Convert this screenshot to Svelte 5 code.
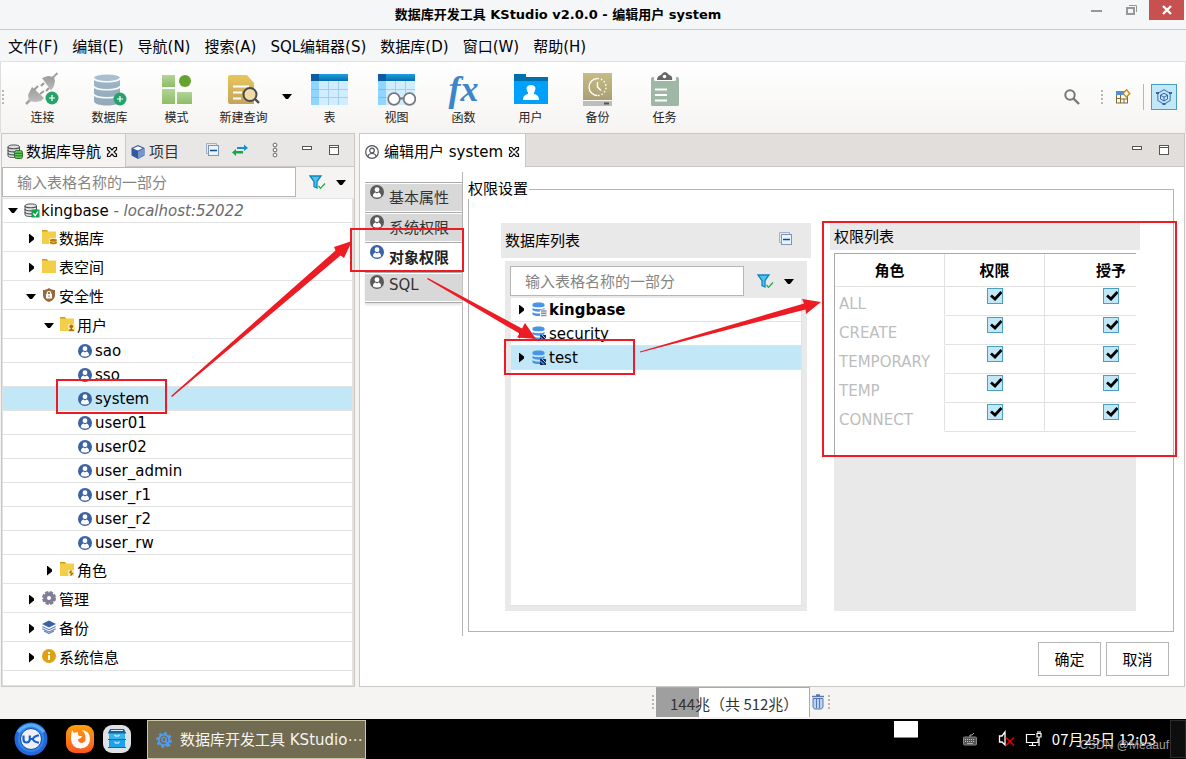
<script>
  const menus = ['文件(F)', '编辑(E)', '导航(N)', '搜索(A)', 'SQL编辑器(S)', '数据库(D)', '窗口(W)', '帮助(H)'];

  const tree = [
    { label: 'kingbase', note: ' - localhost:52022', level: 0, icon: 'server', open: true },
    { label: '数据库', level: 1, icon: 'folderDb', open: false },
    { label: '表空间', level: 1, icon: 'folder', open: false },
    { label: '安全性', level: 1, icon: 'shield', open: true },
    { label: '用户', level: 2, icon: 'folderUser', open: true },
    { label: 'sao', level: 3, icon: 'user' },
    { label: 'sso', level: 3, icon: 'user' },
    { label: 'system', level: 3, icon: 'user', selected: true },
    { label: 'user01', level: 3, icon: 'user' },
    { label: 'user02', level: 3, icon: 'user' },
    { label: 'user_admin', level: 3, icon: 'user' },
    { label: 'user_r1', level: 3, icon: 'user' },
    { label: 'user_r2', level: 3, icon: 'user' },
    { label: 'user_rw', level: 3, icon: 'user' },
    { label: '角色', level: 2, icon: 'folderRole', open: false },
    { label: '管理', level: 1, icon: 'gear', open: false },
    { label: '备份', level: 1, icon: 'layers', open: false },
    { label: '系统信息', level: 1, icon: 'info', open: false },
  ];
  const isTall = (s) => /[\u4e00-\u9fff]/.test(s);

  const sideTabs = ['基本属性', '系统权限', '对象权限', 'SQL'];
  let activeTab = $state('对象权限');

  const databases = [
    { name: 'kingbase', bold: true },
    { name: 'security' },
    { name: 'test', selected: true },
  ];

  let grants = $state(
    ['ALL', 'CREATE', 'TEMPORARY', 'TEMP', 'CONNECT'].map((role) => ({ role, allow: true, grant: true }))
  );
</script>

{#snippet close()}
  <svg width="12" height="12" viewBox="0 0 12 12"><path d="M1.500 1.500H3.800L6 4 8.200 1.500H10.500V3.800L8 6 10.500 8.200V10.500H8.200L6 8 3.800 10.500H1.500V8.200L4 6 1.500 3.800Z" fill="#fff" stroke="#111" stroke-width="1.200" /></svg>
{/snippet}

{#snippet minimize()}
  <svg width="10" height="4" viewBox="0 0 10 4"><rect x=".5" y=".5" width="9" height="3" fill="#fff" stroke="#555" /></svg>
{/snippet}

{#snippet maximize()}
  <svg width="10" height="10" viewBox="0 0 10 10"><rect x=".5" y=".5" width="9" height="9" fill="#fff" stroke="#555" /><path d="M1 2.500H9" stroke="#555" /></svg>
{/snippet}

{#snippet collapseAll()}
  <svg width="14" height="14" viewBox="0 0 14 14"><path d="M.5 10.500V.5H10.500V2M.5 10.500H2" fill="none" stroke="#a3b1c6" /><rect x="2.500" y="2.500" width="10" height="10" fill="#e8f5ff" stroke="#8095b5" /><path d="M4 7.500H11" stroke="#124a86" stroke-width="1.500" /></svg>
{/snippet}

{#snippet filter()}
  <svg width="17" height="15" viewBox="0 0 17 15"><path d="M1 1H12L8 6.500V13L5 11.500V6.500Z" fill="#55c0ea" stroke="#0b88c4" stroke-width="1.300" /><path d="M9.500 11L11.500 13.300 16 8.500" fill="none" stroke="#18a845" stroke-width="1.200" /></svg>
{/snippet}

{#snippet caret()}
  <svg width="10" height="5" viewBox="0 0 10 5"><path d="M0 0H10L6 5H4Z" fill="#000" /></svg>
{/snippet}

{#snippet userIcon(color)}
  <svg width="14" height="14" viewBox="0 0 14 14"><circle cx="7" cy="7" r="7" fill={color} /><circle cx="7" cy="4.700" r="2.400" fill="#fff" /><path d="M2.800 11.300C3 8.700 4.500 7.800 5.500 7.600L7 8.500 8.500 7.600C9.500 7.800 11 8.700 11.200 11.300 9 13 5 13 2.800 11.300Z" fill="#fff" /></svg>
{/snippet}

{#snippet dbIcon(kind)}
  <svg width="15" height="15" viewBox="0 0 15 15">
    <path d="M.5 2.300C.5-.2 12.500-.2 12.500 2.300V4C12.500 5.800.5 5.800.5 4ZM.5 6C3 7.600 10 7.600 12.500 6V8.300C10 10.200 3 10.200.5 8.300ZM.5 10.300C3 12 10 12 12.500 10.300V12.500C10 14.600 3 14.600.5 12.500Z" fill="#4a94e4" />
    {#if kind === 'lines'}
      <rect x="8" y="7.500" width="7" height="7.500" rx="1.500" fill="#fff" /><path d="M9 9H14.500M9 11.300H14.500M9 13.500H14.500" stroke="#8c8ca4" stroke-width="1.400" />
    {:else}
      <rect x="8" y="9" width="6" height="6" fill="#102a60" /><path d="M8 10.500L12 14.500M10 9L14 13" stroke="#b5c8e5" />
    {/if}
  </svg>
{/snippet}

{#snippet treeIcon(kind)}
  {#if kind === 'user'}
    {@render userIcon('#3a62a5')}
  {:else if kind === 'server'}
    <svg width="16" height="15" viewBox="0 0 16 15"><path d="M1 2.800C1 .3 12.500.3 12.500 2.800V12C12.500 14 1 14 1 12Z" fill="#e8e8e8" stroke="#4d5358" /><path d="M1 3C1 5.300 12.500 5.300 12.500 3M1 6C1 8.500 12.500 8.500 12.500 6M1 9C1 11.500 12.500 11.500 12.500 9" fill="none" stroke="#4d5358" stroke-width="1.200" /><rect x="7.500" y="6.500" width="8" height="8" fill="#12a150" /><path d="M9.300 10.300L11.200 12.700 14 8.500" fill="none" stroke="#fff" stroke-width="1.300" /></svg>
  {:else if kind === 'shield'}
    <svg width="14" height="14" viewBox="0 0 14 14"><path d="M7 0C9 1.500 11 2 13 2V7C13 10.500 10.500 12.800 7 14 3.500 12.800 1 10.500 1 7V2C3 2 5 1.500 7 0Z" fill="#99683d" /><rect x="4" y="6" width="6" height="4.500" fill="#fff" /><path d="M5.300 6V4.800Q5.300 3.500 7 3.500T8.700 4.800V6" fill="none" stroke="#fff" stroke-width="1.200" /><path d="M7 7.300V9.200" stroke="#99683d" /></svg>
  {:else if kind === 'gear'}
    <svg width="14" height="14" viewBox="0 0 14 14"><circle cx="7" cy="7" r="5.700" fill="#827d96" /><circle cx="7" cy="7" r="5.800" fill="none" stroke="#827d96" stroke-width="2.400" stroke-dasharray="3.200 1.355" /><circle cx="7" cy="7" r="2" fill="#fff" /></svg>
  {:else if kind === 'layers'}
    <svg width="14" height="14" viewBox="0 0 14 14"><path d="M7 .5L14 4 7 7.500 0 4Z" fill="#3a62a5" /><path d="M.3 6.500L7 9.700 13.700 6.500M.3 8.800L7 12 13.700 8.800M2 11L7 13.500 12 11" fill="none" stroke="#5f80b8" stroke-width="1.100" /></svg>
  {:else if kind === 'info'}
    <svg width="14" height="14" viewBox="0 0 14 14"><circle cx="7" cy="7" r="7" fill="#e0a011" /><path d="M6 3H8V5H6ZM6 6H8V11H6Z" fill="#fff" /></svg>
  {:else}
    <svg width="15" height="15" viewBox="0 0 15 15">
      <path d="M0 0H5L6.500 2H0Z" fill="#d99b16" /><path d="M0 1.500H14V14H0Z" fill="#f3ce47" />
      {#if kind === 'folderDb'}
        <rect x="7" y="8" width="8" height="7" rx="2" fill="#fff3c4" /><ellipse cx="11.300" cy="10.300" rx="3.500" ry="1.500" fill="#b87b10" /><path d="M8 12.300Q11.300 14.500 14.800 12.300" fill="none" stroke="#b87b10" stroke-width="1.800" />
      {:else if kind === 'folderUser'}
        <path d="M8 7H15V15H8Z" fill="#fbe9a4" /><circle cx="11.300" cy="9.300" r="1.900" fill="#a8740f" /><path d="M8.500 14Q8.500 12 11.300 12T14.300 14Z" fill="#a8740f" /><path d="M11.300 10V13" stroke="#a8740f" stroke-width="1.400" />
      {:else if kind === 'folderRole'}
        <path d="M8 8H14V14H8Z" fill="#fbe9a4" /><path d="M11.500 8.500L10 10.500 12.500 11.500 10.500 13.500" fill="none" stroke="#a8740f" stroke-width="1.400" />
      {/if}
    </svg>
  {/if}
{/snippet}

{#snippet tableShape()}
  <rect x="0" y="2" width="37" height="31" fill="#d0edff" /><rect x="0" y="8" width="8" height="25" fill="#8fd5ff" /><path d="M8 17.500H37M8 25.500H37M17.500 9V33M27.500 9V33" stroke="#a4cfe9" /><path d="M0 17.500H8M0 25.500H8" stroke="#77bfeb" /><rect x="0" y="2" width="37" height="7" fill="url(#tblHead)" /><rect x="0" y="2" width="8" height="7" fill="#0c5ba3" />
{/snippet}

{#snippet plusBadge(x, y)}
  <circle cx={x} cy={y} r="6.500" fill="#25a36b" /><path d="M{x - 3} {y}H{x + 3}M{x} {y - 3}V{y + 3}" stroke="#fff" stroke-width="1.200" />
{/snippet}

{#snippet tool(label, art)}
  <button class="tool">{@render art()}<span>{label}</span></button>
{/snippet}

{#snippet artConnect()}
  <svg width="37" height="34" viewBox="0 0 37 34"><defs><linearGradient id="plug" x1="0" y1="0" x2="0" y2="1"><stop offset="0" stop-color="#9b9b9b" /><stop offset="1" stop-color="#bbb" /></linearGradient></defs><path d="M33.500 1L28 6.500" stroke="#a3a3a3" stroke-width="2" /><path d="M18 6L24 4 30 5 31 9 30 14 27 18.500Z" fill="url(#plug)" /><path d="M20 11L17 14M25 16L22 19" stroke="#9b9b9b" stroke-width="2.200" /><path d="M2 32L6 28" stroke="#a3a3a3" stroke-width="2.500" /><path d="M8 15L20 26 17 29 11 30 5 29 4 23Z" fill="url(#plug)" /><path d="M10 18L14 14M16 22L20 19" stroke="#9b9b9b" stroke-width="2" />{@render plusBadge(28, 26)}</svg>
{/snippet}
{#snippet artDatabase()}
  <svg width="37" height="34" viewBox="0 0 37 34"><defs><linearGradient id="cyl" x1="0" y1="0" x2="0" y2="1"><stop offset="0" stop-color="#9eb5c7" /><stop offset="1" stop-color="#93a9b8" /></linearGradient></defs><path d="M3 6V29C3 35 29 35 29 29V6Z" fill="url(#cyl)" /><ellipse cx="16" cy="6" rx="13" ry="3.500" fill="#a9bfd0" /><path d="M3 6C3 11 29 11 29 6M3 14C3 19 29 19 29 14M3 22C3 27 29 27 29 22" fill="none" stroke="#f6f9fa" stroke-width="1.500" />{@render plusBadge(29, 27)}</svg>
{/snippet}
{#snippet artSchema()}
  <svg width="30" height="34" viewBox="0 0 30 34"><defs><linearGradient id="sq" x1="0" y1="0" x2="0" y2="1"><stop offset="0" stop-color="#b2d498" /><stop offset="1" stop-color="#8dbd67" /></linearGradient></defs><rect y="3" width="13" height="12" fill="url(#sq)" /><circle cx="23" cy="9" r="6" fill="#66a22e" /><rect y="17" width="13" height="15" fill="url(#sq)" /><rect x="15" y="20" width="15" height="12" fill="url(#sq)" /></svg>
{/snippet}
{#snippet artQuery()}
  <svg width="32" height="34" viewBox="0 0 32 34"><defs><linearGradient id="doc" x1="0" y1="0" x2="0" y2="1"><stop offset="0" stop-color="#e8c65c" /><stop offset="1" stop-color="#c4a45b" /></linearGradient></defs><path d="M2 3H19L26 11V32H2Q0 32 0 30V5Q0 3 2 3Z" fill="url(#doc)" /><path d="M5 14.500H21M5 20.500H14M5 26.500H13" stroke="#fff" stroke-width="2" /><circle cx="22" cy="22.500" r="6.500" fill="#f0dbad" stroke="#494949" stroke-width="2" /><path d="M27 27L31 31" stroke="#494949" stroke-width="2.400" /></svg>
{/snippet}
{#snippet artTable()}
  <svg width="37" height="34" viewBox="0 0 37 34"><defs><linearGradient id="tblHead" x1="0" y1="0" x2="0" y2="1"><stop offset="0" stop-color="#1ba0e3" /><stop offset="1" stop-color="#086ca9" /></linearGradient></defs>{@render tableShape()}</svg>
{/snippet}
{#snippet artView()}
  <svg width="38" height="34" viewBox="0 0 38 34">{@render tableShape()}<circle cx="16" cy="27" r="5.800" fill="#fff" stroke="#777" stroke-width="1.700" /><circle cx="31.500" cy="27" r="5.800" fill="#fff" stroke="#777" stroke-width="1.700" /><path d="M21.500 26.500H26" stroke="#777" stroke-width="2" /></svg>
{/snippet}
{#snippet artFunction()}
  <span class="fx">fx</span>
{/snippet}
{#snippet artUser()}
  <svg width="34" height="34" viewBox="0 0 34 34"><path d="M0 2H12V5H34V10H0Z" fill="#0070ad" /><rect y="9" width="34" height="23" fill="#00a1fd" /><path d="M17 13C22 13 22.500 17 20 20.500V22C23 23 25 23.500 25 28H9C9 23.500 11 23 14 22V20.500C11.500 17 12 13 17 13Z" fill="#fff" /></svg>
{/snippet}
{#snippet artBackup()}
  <svg width="29" height="34" viewBox="0 0 29 34"><defs><linearGradient id="bak" x1="0" y1="0" x2="0" y2="1"><stop offset="0" stop-color="#c8bc84" /><stop offset="1" stop-color="#a99f72" /></linearGradient></defs><rect y="1" width="29" height="27" fill="url(#bak)" /><rect y="29" width="29" height="5" fill="#bdbdbd" /><path d="M21 31.500H26" stroke="#555" stroke-width="2" /><path d="M14.500 6.500A8.500 8.500 0 0 0 14.500 23.500" fill="none" stroke="#fff" stroke-width="1.300" /><path d="M14.500 6.500A8.500 8.500 0 0 1 14.500 23.500" fill="none" stroke="#fff" stroke-width="1.500" stroke-dasharray="1.500 2" /><path d="M14.500 10V15L18 18.500" fill="none" stroke="#fff" stroke-width="1.500" /></svg>
{/snippet}
{#snippet artTask()}
  <svg width="28" height="34" viewBox="0 0 28 34"><rect y="5" width="28" height="29" rx="1.500" fill="#9fb7a5" /><path d="M3 4H25V8Q25 9 23 9H5Q3 9 3 8Z" fill="#fafafa" /><path d="M6 8Q6 4 10 3Q14-3 18 3Q22 4 21 8Z" fill="#666" /><circle cx="13.500" cy="4.500" r="1.800" fill="#fff" /><path d="M4 17.500H16M4 23H16M4 28.500H16" stroke="#fff" stroke-width="2" /></svg>
{/snippet}

<div class="screen">
  <header class="titlebar">
    <h1>数据库开发工具 KStudio v2.0.0 - 编辑用户 system</h1>
    <div class="winctl">
      <button aria-label="最小化"><svg width="11" height="12" viewBox="0 0 11 12"><path d="M0 7H11" stroke="#979797" stroke-width="2" /></svg></button>
      <button aria-label="还原"><svg width="11" height="12" viewBox="0 0 11 12"><rect x="1" y="4" width="7" height="6" fill="none" stroke="#979797" stroke-width="2" /><path d="M3 1.500H10.500V8" fill="none" stroke="#979797" /></svg></button>
      <button class="quit" aria-label="关闭"><svg width="10" height="10" viewBox="0 0 10 10"><path d="M1 1L9 9M9 1L1 9" stroke="#fff" stroke-width="2.400" /></svg></button>
    </div>
  </header>

  <nav class="menubar">
    {#each menus as m}<button>{m}</button>{/each}
  </nav>

  <div class="toolbar">
    <i class="grip"></i>
    <div class="tools">
      {@render tool('连接', artConnect)}
      {@render tool('数据库', artDatabase)}
      {@render tool('模式', artSchema)}
      {@render tool('新建查询', artQuery)}
      <button class="drop" aria-label="更多">{@render caret()}</button>
      {@render tool('表', artTable)}
      {@render tool('视图', artView)}
      {@render tool('函数', artFunction)}
      {@render tool('用户', artUser)}
      {@render tool('备份', artBackup)}
      {@render tool('任务', artTask)}
    </div>
    <div class="right-tools">
      <button aria-label="搜索"><svg width="16" height="16" viewBox="0 0 16 16"><circle cx="6" cy="6" r="4.700" fill="none" stroke="#777" stroke-width="2" /><path d="M9.500 9.500L15 15" stroke="#777" stroke-width="2.400" /></svg></button>
      <i class="grip"></i>
      <button aria-label="打开透视图"><svg width="16" height="16" viewBox="0 0 16 16"><rect x="1.500" y="3.500" width="11" height="10.500" fill="#fdf9e8" stroke="#7c6c3c" /><rect x="1" y="2" width="9" height="4" fill="#4f8fd6" /><path d="M5.500 6V14M1.500 9.500H5.500M5.500 10H12.500M9 10V14" stroke="#7c6c3c" /><path d="M11.500 .8L14.800 4.500 11.500 8 8 4.500Z" fill="#fff" stroke="#c08d17" stroke-width="1.400" /></svg></button>
      <i class="rule"></i>
      <button class="persp" aria-label="透视图"><svg width="16" height="16" viewBox="0 0 16 16"><path d="M8 .8L14.200 4.300V11.500L8 15.200 1.800 11.500V4.300Z" fill="none" stroke="#5384c0" stroke-width="1.200" /><path d="M8 4.200L11.500 6.200V10L8 12 4.500 10V6.200ZM4.500 6.200L8 8.200 11.500 6.200M8 8.200V12" fill="none" stroke="#3a62a5" /><path d="M0 4H3M13 4H16M6.500 15H9.500" stroke="#3a62a5" stroke-width="2" /></svg></button>
    </div>
  </div>

  <main>
    <section class="panel nav">
      <div class="tabbar">
        <button class="tab on">
          <svg width="16" height="15" viewBox="0 0 16 15"><path d="M1 2.800C1 .3 12.500.3 12.500 2.800V12C12.500 14 1 14 1 12Z" fill="#ddd" stroke="#4d5358" /><path d="M1 3C1 5.300 12.500 5.300 12.500 3M1 6C1 8.500 12.500 8.500 12.500 6M1 9C1 11.500 12.500 11.500 12.500 9" fill="none" stroke="#4d5358" stroke-width="1.200" /><rect x="7.500" y="6.500" width="8" height="8" rx="2" fill="#63c558" stroke="#26752b" /><path d="M8 9.300H15M8 11.800H15" stroke="#26752b" /></svg>
          <span>数据库导航</span>{@render close()}
        </button>
        <button class="tab">
          <svg width="14" height="14" viewBox="0 0 14 14"><path d="M7 0L13.500 3V10.500L7 14 .5 10.500V3Z" fill="#31599e" /><path d="M7 6.500L13 3.500V10.300L7 13.500Z" fill="#7896c8" /><path d="M2 3.500L7 1.300 11.500 3.300 7 5.500Z" fill="#fff" /></svg>
          <span>项目</span>
        </button>
        <div class="tabtools">
          {@render collapseAll()}
          <svg width="16" height="12" viewBox="0 0 16 12"><path d="M5 3H12V.5L16 4 12 7V5H5Z" fill="#1191cf" /><path d="M11 7H4V5L0 8.500 4 12V9.500H11Z" fill="#19a643" /></svg>
          <svg width="6" height="16" viewBox="0 0 6 16"><circle cx="3" cy="3" r="1.900" fill="#fff" stroke="#666" /><circle cx="3" cy="8" r="1.900" fill="#fff" stroke="#666" /><circle cx="3" cy="13" r="1.900" fill="#fff" stroke="#666" /></svg>
          <span class="up">{@render minimize()}</span>
          {@render maximize()}
        </div>
      </div>
      <div class="search">
        <input type="text" aria-label="过滤对象" placeholder="输入表格名称的一部分" />
        <button class="filter" aria-label="过滤器">{@render filter()}{@render caret()}</button>
      </div>
      <ul class="tree">
        {#each tree as n}
          <li>
            <button class="row level{n.level}" class:tall={isTall(n.label)} class:selected={n.selected}>
              <span class="twist" class:open={n.open} class:shut={n.open === false}></span>
              <span class="ico">{@render treeIcon(n.icon)}</span>
              <span>{n.label}</span>
              {#if n.note}<em>{n.note}</em>{/if}
            </button>
          </li>
        {/each}
      </ul>
    </section>

    <section class="panel editor">
      <div class="tabbar">
        <button class="tab on">
          <svg width="14" height="14" viewBox="0 0 14 14"><circle cx="7" cy="7" r="6.300" fill="#fff" stroke="#50545a" stroke-width="1.200" /><circle cx="7" cy="5.500" r="2.300" fill="none" stroke="#50545a" stroke-width="1.200" /><path d="M3 11.500Q3.300 8.500 7 8.500T11 11.500" fill="none" stroke="#50545a" stroke-width="1.200" /></svg>
          <span>编辑用户 system</span>{@render close()}
        </button>
        <div class="tabtools">
          <span class="up">{@render minimize()}</span>
          {@render maximize()}
        </div>
      </div>

      <div class="editor-body">
        <div class="pages">
          {#each sideTabs as t}
            <button class:on={activeTab === t} class:cjk={isTall(t)} onclick={() => (activeTab = t)}>
              {@render userIcon(activeTab === t ? '#3a62a5' : '#5a5a5a')}<span>{t}</span>
            </button>
          {/each}
        </div>
        <div class="page">
          <fieldset>
            <legend>权限设置</legend>
            <div class="split">
              <div class="dblist">
                <div class="head"><h2>数据库列表</h2><button aria-label="全部折叠">{@render collapseAll()}</button></div>
                <div class="box">
                  <div class="search">
                    <input type="text" aria-label="过滤数据库" placeholder="输入表格名称的一部分" />
                    <button class="filter" aria-label="过滤器">{@render filter()}{@render caret()}</button>
                  </div>
                  <ul class="tree">
                    {#each databases as d}
                      <li>
                        <button class="row" class:selected={d.selected} class:bold={d.bold}>
                          <span class="twist shut"></span>
                          <span class="ico">{@render dbIcon(d.bold ? 'lines' : 'hatch')}</span>
                          <span>{d.name}</span>
                        </button>
                      </li>
                    {/each}
                  </ul>
                </div>
              </div>

              <div class="permlist">
                <div class="head"><h2>权限列表</h2></div>
                <div class="box">
                  <div class="sheet">
                    <table>
                      <thead><tr><th class="role">角色</th><th class="allow">权限</th><th class="give">授予</th></tr></thead>
                      <tbody>
                        {#each grants as g}
                          <tr>
                            <td class="name">{g.role}</td>
                            <td><input type="checkbox" aria-label="{g.role} 权限" bind:checked={g.allow} /></td>
                            <td><input type="checkbox" aria-label="{g.role} 授予" bind:checked={g.grant} /></td>
                          </tr>
                        {/each}
                      </tbody>
                    </table>
                  </div>
                </div>
              </div>
            </div>
          </fieldset>
          <div class="actions"><button>确定</button><button>取消</button></div>
        </div>
      </div>
    </section>
  </main>

  <div class="status">
    <i class="grip"></i>
    <div class="heap">144兆（共 512兆）</div>
    <button class="trash" aria-label="回收内存"><svg width="12" height="16" viewBox="0 0 12 16"><path d="M0 2.500H12M4 1H8" stroke="#5877ad" stroke-width="1.500" /><path d="M1 4.500H11V13L9.500 15H2.500L1 13Z" fill="#b8d2f2" stroke="#5877ad" /><path d="M4.500 5V14M7.500 5V14" stroke="#5877ad" /></svg></button>
    <i class="grip"></i>
  </div>

  <footer class="taskbar">
    <button class="start" aria-label="开始"><svg width="34" height="34" viewBox="0 0 34 34"><circle cx="17" cy="17" r="16.500" fill="#2467d8" /><circle cx="17" cy="17" r="13" fill="#2e86ee" /><path d="M4 10Q17-4 30 10" fill="none" stroke="#57adf8" stroke-width="3" /><circle cx="17" cy="17" r="10.500" fill="#eef0f3" stroke="#17489d" /><path d="M9.500 13.500V17.500Q9.500 20.500 12.500 20.500T15.800 17.500V13.500M25 13.500H23.500Q20 14.500 18.500 17 20 19.800 23.500 20.500H25M16 17H20" fill="none" stroke="#1860d0" stroke-width="2.200" /></svg></button>
    <button class="app" aria-label="浏览器"><svg width="28" height="28" viewBox="0 0 28 28"><defs><linearGradient id="ff" x1="0" y1="0" x2="0" y2="1"><stop offset="0" stop-color="#ff9d0a" /><stop offset="1" stop-color="#ff5722" /></linearGradient></defs><rect width="28" height="28" rx="9" fill="url(#ff)" /><path d="M6 5L8 8 12 7Q11 9 13 11L16 11Q15 14 12 14Q12 18 16 18Q20 17 19.500 13Q19.500 8 16 5Q24 6 24 14Q23.500 23 14.500 23.500Q5.500 23 5 14Q4.800 9 6 5Z" fill="#fff" /></svg></button>
    <button class="app" aria-label="文件管理器"><svg width="28" height="28" viewBox="0 0 28 28"><rect width="28" height="28" rx="9" fill="#dde2e6" /><path d="M7 4H21L23 8H5Z" fill="#12639a" /><path d="M8 5.500H20" stroke="#dfeefa" /><rect x="6" y="8" width="16" height="6" fill="#36b3f3" /><rect x="6" y="15" width="16" height="7" fill="#1ca2ec" /><path d="M5 8H23M5 14.500H23M5 22.500H23" stroke="#176b9d" /><path d="M12 9.500V11H16V9.500M12 16.500V18H16V16.500" fill="none" stroke="#fff" /></svg></button>
    <button class="task"><svg width="16" height="16" viewBox="0 0 16 16"><circle cx="8" cy="8" r="5.300" fill="none" stroke="#4f9df5" stroke-width="1.800" /><circle cx="8" cy="8" r="6.800" fill="none" stroke="#4f9df5" stroke-width="2.200" stroke-dasharray="2.600 2.740" /><circle cx="8" cy="7.500" r="2.200" fill="none" stroke="#4f9df5" stroke-width="1.300" /><path d="M9 9L14 14" stroke="#4f9df5" stroke-width="2" /></svg><span>数据库开发工具 KStudio⋯</span></button>
    <div class="tray">
      <i class="desk"></i>
      <svg class="kbd" width="14" height="14" viewBox="0 0 14 14"><rect x=".5" y="5" width="13" height="8" rx="1" fill="#555" stroke="#858585" /><path d="M2 7.500H12M2 9.500H12" stroke="#c4c4c4" stroke-dasharray="1 1" /><path d="M4 11.500H10M7 5V3H9L11 1" fill="none" stroke="#aaa" /></svg>
      <svg class="snd" width="17" height="18" viewBox="0 0 17 18"><path d="M1.500 6H4L7 2V15L4 12H1.500Z" fill="none" stroke="#fff" stroke-width="1.300" /><path d="M8 7.500L16 15.500M16 7.500L8 15.500" stroke="#d00" stroke-width="1.600" /></svg>
      <svg class="net" width="17" height="18" viewBox="0 0 17 18"><path d="M10 4.500H1.500V12.500H13V9M7.500 13V15.500M4 15.500H11" fill="none" stroke="#fff" stroke-width="1.200" /><path d="M12 3.500H16V7H12ZM13 1V3.500M15 1V3.500M14 7V16" fill="none" stroke="#fff" stroke-width="1.200" /></svg>
      <time>07月25日 12:03</time>
      <i class="edge"></i>
    </div>
    <span class="mark">CSDN @Meaauf</span>
  </footer>

  <svg class="notes" width="1186" height="759" viewBox="0 0 1186 759" aria-hidden="true">
    <g fill="none" stroke="#ed1c24" stroke-width="2">
      <rect x="57" y="380" width="109" height="33" /><rect x="351" y="229" width="112" height="42" /><rect x="505" y="340" width="129" height="34" /><rect x="823" y="222" width="353" height="234" />
    </g>
    <g fill="#ed1c24">
      <path d="M171 396L335.500 250.500 334 247 352 241 344 258 340.500 255.500 172 397Z" />
      <path d="M427 279L428 278 522 328.500 525 323 536 339 517 337.500 519.500 333.500Z" />
      <path d="M640 351.500L804 303.500 802 299 821 302 806 314 805.500 309.500 640 352.500Z" />
    </g>
  </svg>
</div>

<style>
  :global(body) { margin: 0; background: #f5f4f3; }
  .screen, .screen * { box-sizing: border-box; }
  .screen {
    position: relative; display: flex; flex-direction: column; min-height: 100vh; overflow: hidden;
    font: 15px/22px "DejaVu Sans", "Noto Sans CJK SC", sans-serif; color: #000; background: #f5f4f3;
  }
  button { border: 0; padding: 0; background: none; font: inherit; color: inherit; display: flex; align-items: center; white-space: nowrap; }
  svg { display: block; flex: none; }
  h1, h2, ul { margin: 0; padding: 0; font-weight: normal; font-size: 15px; list-style: none; }

  .titlebar { display: grid; grid-template-columns: 1fr auto 1fr; height: 30px; background: #f5f6f8; border-bottom: 1px solid #c8c9ca; }
  .titlebar h1 { grid-column: 2; margin-right: 70px; font-size: 13px; line-height: 30px; font-weight: bold; }
  .winctl { grid-column: 3; justify-self: end; display: flex; height: 20px; padding-right: 2px; }
  .winctl button { width: 35px; justify-content: center; }
  .winctl .quit { background: #c75050; }

  .menubar { display: flex; gap: 14px; height: 32px; padding: 2px 8px 0; background: #f5f6f8; border-bottom: 1px solid #e2e2e2; }

  .toolbar { display: flex; align-items: center; height: 71px; padding: 0 8px 2px 1px; background: linear-gradient(#fff, #f5f4f2); border-left: 1px solid #ddd; border-right: 1px solid #ddd; }
  .grip { flex: none; width: 2px; height: 14px; background: repeating-linear-gradient(#bcb6b0 0 2px, transparent 2px 4px); }
  .tools { display: flex; flex: 1; padding-left: 5px; }
  .tool { flex-direction: column; width: 67px; height: 61px; padding-top: 6px; gap: 3px; font-size: 12px; line-height: 18px; color: #222; }
  .drop { width: 19px; justify-content: center; }
  .fx { height: 34px; font: italic bold 36px/34px "Liberation Serif", serif; color: #3c86c8; }
  .right-tools { display: flex; align-items: center; }
  .right-tools .grip { margin: 0 12px 0 21px; }
  .right-tools .rule { width: 1px; height: 26px; margin: 0 7px 0 12px; background: #b6b6b6; }
  .persp { width: 26px; height: 26px; justify-content: center; background: #c2e8f7; border: 1px solid #4b9fbe; }

  main { display: flex; flex: 1; gap: 4px; padding: 0 1px; min-height: 554px; }
  .panel { display: flex; flex-direction: column; border: 1px solid #cbc7c3; background: #fff; }
  .nav { flex: 0 0 354px; background: #f5f4f2; }
  .editor { flex: 1; min-width: 0; }
  .tabbar { display: flex; height: 33px; background: #e9e7e6; border-bottom: 1px solid #cbc7c3; }
  .tab { gap: 5px; padding: 2px 5px 0; color: #333; margin-bottom: -1px; }
  .nav .tab { gap: 4px; }
  .tab.on { color: #000; background: #f5f4f2; border-right: 1px solid #cbc7c3; }
  .nav .tab.on { gap: 3px; padding: 2px 7px 0 5px; }
  .nav .tab.on span { margin-right: 2px; }
  .editor .tabbar { background: #e1dedb; }
  .editor .tab.on { background: #fff; }
  .tabtools { display: flex; flex: 1; justify-content: flex-end; align-items: center; padding-right: 15px; }
  .nav .tabtools { gap: 12px; }
  .nav .tabtools svg:nth-of-type(3) { margin: 0 12px; }
  .tabtools .up { padding-bottom: 5px; }
  .nav .up { margin-right: 5px; }
  .editor .tabtools { gap: 17px; }

  .search { display: flex; height: 30px; }
  .search input { flex: 1; min-width: 0; border: 1px solid #b6b6b6; padding: 1px 14px 0; font: inherit; background: #fff; outline: 0; border-radius: 0; }
  .search input::placeholder { color: #858585; opacity: 1; }
  .filter { gap: 10px; width: 58px; padding-left: 13px; }

  .tree { flex: 1; background: #fff; border: 1px solid #e2e2e2; }
  .nav .tree { margin-top: 1px; border-right-width: 2px; }
  .row { width: 100%; height: 24px; border-bottom: 1px solid #e2e2e2; padding-left: 5px; }
  .row.tall { height: 29px; padding-top: 3px; }
  .row.tall .ico { padding-bottom: 3px; }
  .row.level1 { padding-left: 23px; }
  .row.level2 { padding-left: 41px; }
  .row.level3 { padding-left: 59px; }
  .row.selected { background: #c2e8f7; }
  .row.bold { font-weight: bold; }
  .row em { color: #6b6b6b; white-space: pre; }
  .twist { flex: none; width: 10px; margin-right: 6px; }
  .twist::before { content: ""; display: block; }
  .open::before { width: 10px; height: 5px; background: #000; clip-path: polygon(0 0, 100% 0, 60% 100%, 40% 100%); }
  .shut::before { width: 5px; height: 10px; margin-left: 3px; background: #000; clip-path: polygon(0 0, 100% 40%, 100% 60%, 0 100%); }
  .ico { flex: none; width: 17px; }

  .editor-body { display: flex; flex: 1; padding: 5px 10px 10px 5px; }
  .pages { flex: 0 0 98px; margin-bottom: 40px; padding-top: 10px; border-right: 1px solid #b4b4b4; }
  .pages button { width: 97px; height: 30px; align-items: flex-start; gap: 5px; padding: 2px 5px 0; border-top: 1px solid #aaa; background: #d8d8d8; color: #333; line-height: 20px; box-shadow: inset 0 1px #fff, inset 0 -1px #fff; }
  .pages button:last-child { height: 31px; border-bottom: 1px solid #aaa; box-shadow: inset 0 1px #fff, inset 0 -1px #fff, 0 2px 2px #e2e2e2; }
  .pages .cjk span { padding-top: 3px; }
  .pages button.on { background: #fff; font-weight: bold; color: #222; }
  .page { flex: 1; min-width: 0; display: flex; flex-direction: column; padding: 7px 0 0 5px; }
  fieldset { flex: 1; margin: 0; padding: 24px 33px 20px 32px; border: 1px solid #b4b4b4; min-width: 0; }
  legend { padding: 0 1px 0 0; margin-left: -33px; line-height: 20px; background: #fff; }
  .split { display: flex; gap: 19px; height: 100%; }
  .dblist, .permlist { flex: 1; min-width: 0; display: flex; flex-direction: column; }
  .head { display: flex; align-items: center; justify-content: space-between; background: #e9e9e9; }
  .dblist .head { height: 35px; padding: 0 18px 0 4px; margin-bottom: 3px; }
  .dblist .head button { margin-top: -3px; }
  .permlist .head { height: 27px; padding-left: 4px; margin-bottom: 3px; }
  .box { flex: 1; margin: 0 4px; background: #e9e9e9; }
  .dblist .box { display: flex; flex-direction: column; padding: 5px; gap: 2px; }
  .dblist .tree { margin-left: 1px; border-top: 0; border-left: 0; }
  .dblist .row { padding-left: 5px; }
  .sheet { overflow: hidden; background: #fff; border-top: 1px solid #aaa; border-left: 1px solid #aaa; padding-bottom: 24px; }
  table { width: 343px; table-layout: fixed; border-collapse: separate; border-spacing: 0; }
  th, td { padding: 0; border-bottom: 1px solid #e2e2e2; border-right: 1px solid #e2e2e2; text-align: center; }
  th { height: 33px; padding-top: 2px; }
  .role { width: 110px; }
  .allow { width: 100px; }
  td { height: 29px; vertical-align: top; }
  td.name { padding: 6px 0 0 4px; border-bottom-color: transparent; text-align: left; color: #bdbdbd; }
  td input { appearance: none; display: block; width: 16px; height: 16px; margin: 1px auto 0; border: 1px solid #4b9fbe; background: #c2e8f7; }
  td input:checked { background: #c2e8f7 url("data:image/svg+xml,%3Csvg xmlns='http://www.w3.org/2000/svg' viewBox='0 0 14 14'%3E%3Cpath d='M3 6.500L7 10 13.500 3' fill='none' stroke='%23000' stroke-width='2.800'/%3E%3C/svg%3E"); }
  .actions { display: flex; justify-content: flex-end; gap: 5px; padding: 10px 5px 0 0; }
  .actions button { width: 63px; height: 34px; padding-top: 1px; justify-content: center; border: 1px solid #b6b6b6; background: #fff; }

  .status { display: flex; align-items: center; justify-content: flex-end; height: 32px; padding: 0 30% 2px 0; }
  .heap { width: 154px; height: 30px; margin-left: 2px; padding-left: 3px; border: 1px solid #aaa; border-width: 1px 1px 0 0; text-align: center; line-height: 31px; color: #333; background: linear-gradient(90deg, #9f9f9f 28%, #fff 28%); font-family: "Noto Sans CJK SC", sans-serif; }
  .trash { margin: 0 4px 0 2px; }

  .taskbar { position: relative; display: flex; align-items: center; height: 40px; padding-left: 14px; background: #000; color: #fff; }
  .start { margin-right: 18px; }
  .app { margin-right: 9px; }
  .task { width: 219px; height: 39px; gap: 8px; margin-left: 7px; padding: 2px 8px 0; background: #716b51; border: 1px solid #cbc7a5; color: #f5f5f5; }
  .tray { display: flex; flex: 1; justify-content: flex-end; align-items: center; }
  .desk { align-self: flex-start; width: 24px; height: 17px; margin: 1px 45px 0 0; background: #fff; border-bottom: 1px solid #4b9fbe; }
  .kbd { margin-right: 21px; }
  .snd, .net { margin-right: 10px; }
  time { font-family: "Noto Sans CJK SC", sans-serif; margin-right: 14px; }
  .edge { width: 16px; height: 38px; background: #0e0e0e; border: 1px solid #2c2c2c; }
  .mark { position: absolute; right: 17px; bottom: 4px; font: 12px/20px "Liberation Sans", "Noto Sans CJK SC", sans-serif; color: #a0a0a0; }
  .notes { position: absolute; left: 0; top: 0; pointer-events: none; }
</style>
